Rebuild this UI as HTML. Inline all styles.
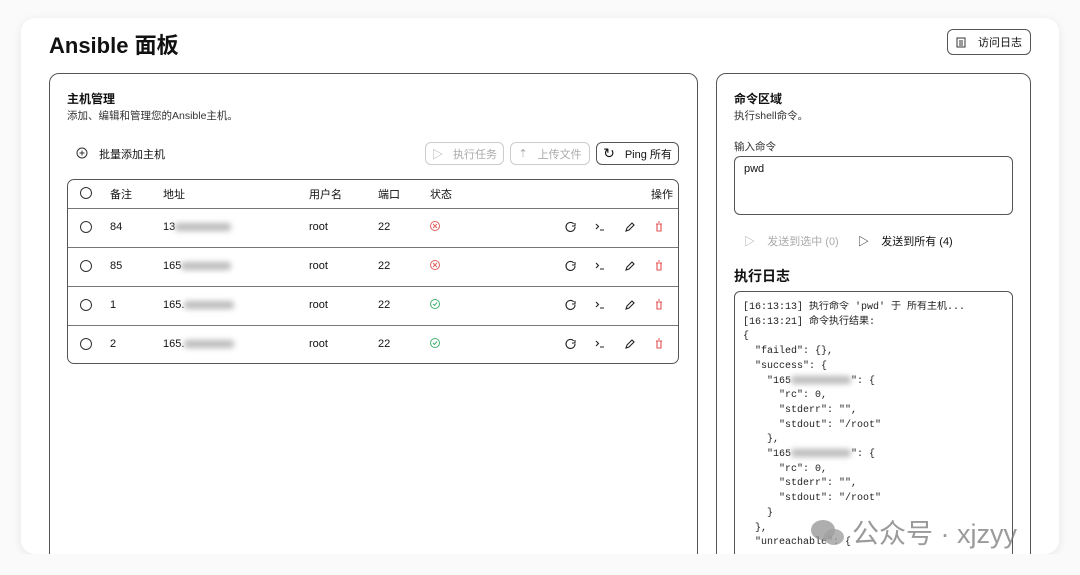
<!DOCTYPE html>
<html style="overflow:hidden;height:575px"><head><meta charset="utf-8"><style>
*{box-sizing:border-box;margin:0;padding:0}
body{width:1080px;height:575px;background:#fafafa;font-family:"Liberation Sans","Noto Sans CJK SC",sans-serif;color:#111;position:relative;overflow:hidden}
.card{position:absolute;left:21px;top:18px;width:1038px;height:536px;background:#fff;border-radius:14px;box-shadow:0 2px 10px rgba(0,0,0,.08);overflow:hidden}
.a{position:absolute;white-space:nowrap}
.panel{position:absolute;border:1px solid #555;border-radius:10px;background:#fff}
.btn{position:absolute;border:1px solid #555;border-radius:6px;font-size:11px;display:flex;align-items:center;justify-content:center;gap:10px}
.dis{border-color:#ccc;color:#aaa}
.tbl{position:absolute;left:67px;top:179px;width:612px;height:185px;border:1px solid #555;border-radius:7px}
.hl{position:absolute;left:0;right:0;height:1px;background:#777}
.cb{position:absolute;width:12px;height:12px;border:1px solid #333;border-radius:50%}
.t{font-size:11px}
.blur{display:inline-block;background:#bbb;filter:blur(3px);height:8px;vertical-align:middle;border-radius:3px}
.mono{font-family:"Liberation Mono","Noto Sans CJK SC",monospace;font-size:10px;line-height:14.7px;color:#222;white-space:pre}
</style></head><body>
<div class="card">
<div class="panel" style="left:28px;top:55px;width:649px;height:500px"></div>
<div class="panel" style="left:695px;top:55px;width:315px;height:500px"></div>
<div style="position:absolute;left:713px;top:273px;width:279px;height:300px;border:1px solid #555;border-radius:6px"></div>
</div>
<div class="a" style="left:49px;top:28px;font-size:22px;font-weight:bold">Ansible 面板</div>
<div class="btn" style="left:947px;top:29px;width:84px;height:26px;gap:12px"><svg width="10" height="11" viewBox="0 0 10 11"><rect x="1" y="1" width="8" height="9" fill="none" stroke="#333"/><path d="M3 4h4M3 6h4M3 8h4" stroke="#333"/></svg><span>访问日志</span></div>

<div class="a" style="left:67px;top:90px;font-size:12px;font-weight:bold">主机管理</div>
<div class="a" style="left:67px;top:108px;font-size:10.5px;color:#333">添加、编辑和管理您的Ansible主机。</div>
<svg class="a" style="left:76px;top:147px" width="12" height="12"><circle cx="6" cy="6" r="5" fill="none" stroke="#333"/><path d="M6 3.5v5M3.5 6h5" stroke="#333"/></svg>
<div class="a t" style="left:99px;top:146px">批量添加主机</div>
<div class="btn dis" style="left:425px;top:142px;width:79px;height:23px"><span>▷</span><span>执行任务</span></div>
<div class="btn dis" style="left:510px;top:142px;width:80px;height:23px"><span>⇡</span><span>上传文件</span></div>
<div class="btn" style="left:596px;top:142px;width:83px;height:23px"><span style="font-size:14px">↻</span><span>Ping 所有</span></div>

<div class="tbl">
<div class="hl" style="top:28px"></div><div class="hl" style="top:67px"></div><div class="hl" style="top:106px"></div><div class="hl" style="top:145px"></div>
</div>
<div class="cb" style="left:80px;top:187px"></div>
<div class="a t" style="left:110px;top:186px">备注</div><div class="a t" style="left:163px;top:186px">地址</div><div class="a t" style="left:309px;top:186px">用户名</div><div class="a t" style="left:378px;top:186px">端口</div><div class="a t" style="left:430px;top:186px">状态</div><div class="a t" style="left:651px;top:186px">操作</div>

<div class="cb" style="left:80px;top:221px"></div><div class="a t" style="left:110px;top:221px">84</div><div class="a t" style="left:163px;top:221px">13<span class="blur" style="width:56px"></span></div><div class="a t" style="left:309px;top:221px">root</div><div class="a t" style="left:378px;top:221px">22</div>
<div class="cb" style="left:80px;top:260px"></div><div class="a t" style="left:110px;top:260px">85</div><div class="a t" style="left:163px;top:260px">165<span class="blur" style="width:50px"></span></div><div class="a t" style="left:309px;top:260px">root</div><div class="a t" style="left:378px;top:260px">22</div>
<div class="cb" style="left:80px;top:299px"></div><div class="a t" style="left:110px;top:299px">1</div><div class="a t" style="left:163px;top:299px">165.<span class="blur" style="width:50px"></span></div><div class="a t" style="left:309px;top:299px">root</div><div class="a t" style="left:378px;top:299px">22</div>
<div class="cb" style="left:80px;top:338px"></div><div class="a t" style="left:110px;top:338px">2</div><div class="a t" style="left:163px;top:338px">165.<span class="blur" style="width:50px"></span></div><div class="a t" style="left:309px;top:338px">root</div><div class="a t" style="left:378px;top:338px">22</div>

<svg class="a" style="left:0;top:0" width="700" height="380">
<g fill="none" stroke-width="1">
<g stroke="#e06060"><circle cx="435" cy="226" r="4.5"/><path d="M433 224l4 4M437 224l-4 4"/><circle cx="435" cy="265" r="4.5"/><path d="M433 263l4 4M437 263l-4 4"/></g>
<g stroke="#40b070"><circle cx="435" cy="304" r="4.5"/><path d="M433 304l1.5 1.5 2.5-3"/><circle cx="435" cy="343" r="4.5"/><path d="M433 343l1.5 1.5 2.5-3"/></g>
</g>
<g id="ic" fill="none" stroke="#222" stroke-width="1.1">
<path d="M575 227a4.5 4.5 0 1 1-1.3-3.2M575 223v3h-3"/>
<path d="M596 224l2.5 2.5-2.5 2.5M600 230h4"/>
<path d="M626 231l1-3 5-5 2 2-5 5z"/>
<path d="M656 224h6M657 224v7h4v-7M658 222h2" stroke="#e05050"/>
</g>
<use href="#ic" y="39"/><use href="#ic" y="78"/><use href="#ic" y="117"/>
</svg>

<div class="a" style="left:734px;top:90px;font-size:12px;font-weight:bold">命令区域</div>
<div class="a" style="left:734px;top:108px;font-size:10.5px;color:#333">执行shell命令。</div>
<div class="a" style="left:734px;top:139px;font-size:10.5px;color:#333">输入命令</div>
<div style="position:absolute;left:734px;top:156px;width:279px;height:59px;border:1px solid #555;border-radius:6px"></div>
<div class="a t" style="left:744px;top:163px">pwd</div>
<div class="a" style="left:744px;top:233px;font-size:11px;color:#aaa">▷&nbsp;&nbsp;&nbsp; 发送到选中 (0)</div>
<div class="a" style="left:858px;top:233px;font-size:11px;color:#111">▷&nbsp;&nbsp;&nbsp; 发送到所有 (4)</div>
<div class="a" style="left:734px;top:266px;font-size:14px;font-weight:bold">执行日志</div>
<div class="a mono" style="left:743px;top:301px;height:253px;overflow:hidden">[16:13:13] 执行命令 'pwd' 于 所有主机...
[16:13:21] 命令执行结果:
{
  "failed": {},
  "success": {
    "165<span class="blur" style="width:60px"></span>": {
      "rc": 0,
      "stderr": "",
      "stdout": "/root"
    },
    "165<span class="blur" style="width:60px"></span>": {
      "rc": 0,
      "stderr": "",
      "stdout": "/root"
    }
  },
  "unreachable": {</div>
<div class="a" style="left:808px;top:512px;display:flex;align-items:center;gap:6px;color:rgba(120,120,120,.75);font-size:27px">
<svg width="38" height="30"><ellipse cx="15" cy="13" rx="12" ry="10" fill="rgba(140,140,140,.7)"/><ellipse cx="26" cy="20" rx="10" ry="8" fill="rgba(160,160,160,.8)"/></svg>
<span>公众号 · xjzyy</span></div>
<div style="position:absolute;left:0;top:554px;width:1080px;height:21px;background:#fafafa"></div>
</body></html>
